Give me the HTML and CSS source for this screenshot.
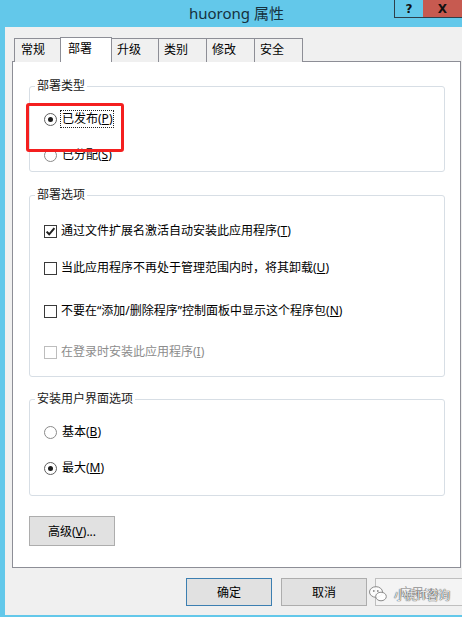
FILE: index.html
```html
<!DOCTYPE html>
<html lang="zh">
<head>
<meta charset="utf-8">
<title>huorong 属性</title>
<link rel="stylesheet" href="styles.css">
</head>
<body>
<div class="window">
  <div class="titlebar">
    <div></div>
    <div class="title">huorong 属性</div>
    <div class="winbtns"><span class="wb help">?</span><span class="wb close">X</span></div>
  </div>
  <div class="frame">
    <div class="tabs">
      <div class="tab">常规</div>
      <div class="tab active">部署</div>
      <div class="tab">升级</div>
      <div class="tab">类别</div>
      <div class="tab">修改</div>
      <div class="tab">安全</div>
    </div>
    <div class="panel">
      <div class="group g1">
        <div class="legend">部署类型</div>
        <div class="opt r1"><span class="radio on"></span><span class="lbl focus">已发布(<u>P</u>)</span></div>
        <div class="opt r2"><span class="radio"></span><span class="lbl">已分配(<u>S</u>)</span></div>
      </div>
      <div class="group g2">
        <div class="legend">部署选项</div>
        <div class="opt c1"><span class="check on"><svg viewBox="0 0 13 13" width="13" height="13"><path d="M2.6 6.6 L5.2 9.3 L10.4 3.2" fill="none" stroke="#1f1f1f" stroke-width="2"/></svg></span><span class="lbl">通过文件扩展名激活自动安装此应用程序(<u>T</u>)</span></div>
        <div class="opt c2"><span class="check"></span><span class="lbl">当此应用程序不再处于管理范围内时，将其卸载(<u>U</u>)</span></div>
        <div class="opt c3"><span class="check"></span><span class="lbl">不要在“添加/删除程序”控制面板中显示这个程序包(<u>N</u>)</span></div>
        <div class="opt c4 disabled"><span class="check"></span><span class="lbl">在登录时安装此应用程序(<u>I</u>)</span></div>
      </div>
      <div class="group g3">
        <div class="legend">安装用户界面选项</div>
        <div class="opt u1"><span class="radio"></span><span class="lbl">基本(<u>B</u>)</span></div>
        <div class="opt u2"><span class="radio on"></span><span class="lbl">最大(<u>M</u>)</span></div>
      </div>
      <button class="btn adv">高级(<u>V</u>)...</button>
    </div>
    <div class="actions">
      <button class="btn primary">确定</button>
      <button class="btn">取消</button>
      <button class="btn off">应用(<u>A</u>)</button>
    </div>
  </div>
</div>
<div class="annot"></div>
<div class="watermark">
  <svg class="wm-icon" viewBox="0 0 20 18" width="20" height="18">
    <ellipse cx="8" cy="7" rx="6.5" ry="5.3" fill="rgba(255,255,255,0.85)" stroke="#8a8a8a" stroke-width="1"/>
    <ellipse cx="13" cy="11.5" rx="5.3" ry="4.3" fill="rgba(255,255,255,0.9)" stroke="#8a8a8a" stroke-width="1"/>
    <circle cx="5.8" cy="6" r="0.9" fill="#8a8a8a"/>
    <circle cx="9.8" cy="6" r="0.9" fill="#8a8a8a"/>
  </svg>
  <span class="wm-text">小虎IT咨询</span>
</div>
</body>
</html>
```
FILE: styles.css
```css
html, body {
  margin: 0;
  padding: 0;
}
body {
  width: 462px;
  height: 617px;
  overflow: hidden;
  position: relative;
  background: #f0f0f0;
  font-family: "Noto Sans", "Noto Sans CJK SC", sans-serif;
  font-size: 12px;
  color: #000;
}
u { text-decoration: underline; text-underline-offset: 1px; }

.window {
  display: flex;
  flex-direction: column;
  height: 617px;
}

.titlebar {
  height: 27px;
  background: #63c8ea;
  display: grid;
  grid-template-columns: 1fr auto 1fr;
  padding-left: 11px;
  flex-shrink: 0;
}
.title {
  font-family: "Noto Sans", "Noto Sans CJK SC", sans-serif;
  font-size: 15px;
  line-height: 26px;
  color: #16313d;
  white-space: nowrap;
}
.winbtns {
  justify-self: end;
  align-self: start;
  display: flex;
}
.wb {
  height: 18px;
  display: flex;
  align-items: center;
  justify-content: center;
  font-family: "DejaVu Sans", sans-serif;
  font-weight: bold;
  font-size: 12px;
  color: #111;
  box-sizing: border-box;
}
.help {
  width: 29px;
  border: 1px solid #2e3f4a;
  border-top: none;
  border-right: none;
  background: #63c8ea;
}
.close {
  width: 39px;
  background: #c75a50;
  border-bottom: 1px solid #2e3f4a;
}

.frame {
  flex: 1;
  background: #f0f0f0;
  border-left: 5px solid #63c8ea;
  border-bottom: 2px solid #63c8ea;
  display: flex;
  flex-direction: column;
}

.tabs {
  display: flex;
  align-items: flex-end;
  height: 25px;
  margin-top: 10px;
  margin-bottom: -1px;
  padding-left: 9px;
  position: relative;
  z-index: 1;
}
.tab {
  box-sizing: border-box;
  height: 24px;
  width: 49px;
  margin-left: -1px;
  border: 1px solid #8d8e96;
  border-bottom: none;
  background: #f0f0f0;
  padding-left: 5px;
  line-height: 22px;
  color: #000;
}
.tab:nth-child(1) { margin-left: 0; width: 48px; padding-left: 6px; }
.tab:nth-child(3) { width: 48px; }
.tab.active {
  height: 25px;
  width: 52px;
  margin-left: -2px;
  background: #fff;
  padding-left: 7px;
  line-height: 22px;
}

.panel {
  box-sizing: border-box;
  margin-left: 7px;
  width: 449px;
  height: 507px;
  background: #fff;
  border: 1px solid #8d8e96;
  padding: 24px 15px 0 16px;
  display: flex;
  flex-direction: column;
  align-items: flex-start;
}

.group {
  align-self: stretch;
  border: 1px solid #d7dee5;
  border-radius: 3px;
  padding: 0 0 0 14px;
}
.legend {
  width: fit-content;
  height: 16px;
  line-height: 16px;
  margin: -9px 0 0 -9px;
  padding: 0 2px;
  background: #fff;
  color: #1a1a1a;
}
.g1 { padding-bottom: 6px; }
.g2 { margin-top: 23px; padding-bottom: 14px; }
.g3 { margin-top: 22px; padding-bottom: 17px; }

.opt {
  display: flex;
  align-items: center;
  height: 20px;
  gap: 3px;
  white-space: nowrap;
}
.r1 { margin-top: 15px; }
.r2 { margin-top: 16px; }
.c1 { margin-top: 18px; }
.c2 { margin-top: 17px; }
.c3 { margin-top: 23px; }
.c4 { margin-top: 21px; }
.u1 { margin-top: 15px; }
.u2 { margin-top: 16px; }

.lbl {
  line-height: 16px;
  padding: 0 1px;
  border: 1px solid transparent;
}
.check + .lbl { margin-left: -1px; }
.lbl.focus { border: 1px dotted #222; }

.radio {
  box-sizing: border-box;
  width: 13px;
  height: 13px;
  border-radius: 50%;
  border: 1px solid #8a8a8a;
  background: #fff;
  display: flex;
  align-items: center;
  justify-content: center;
  flex-shrink: 0;
}
.radio.on { border-color: #5f5f5f; }
.radio.on::after {
  content: "";
  width: 5px;
  height: 5px;
  border-radius: 50%;
  background: #1c1c1c;
}
.check {
  box-sizing: border-box;
  width: 13px;
  height: 13px;
  border: 1px solid #3a3a3a;
  background: #fff;
  flex-shrink: 0;
  position: relative;
  overflow: visible;
}
.check svg {
  display: block;
  margin: -1px 0 0 -1px;
}
.disabled .check { border-color: #bdbdbd; }
.disabled .lbl { color: #8c8c8c; }

.btn {
  box-sizing: border-box;
  font-family: "Noto Sans", "Noto Sans CJK SC", sans-serif;
  font-size: 12px;
  color: #000;
  background: #e1e1e1;
  border: 1px solid #adadad;
  border-radius: 0;
  padding: 0;
  margin: 0;
  flex-shrink: 0;
}
.adv {
  margin-top: 20px;
  width: 86px;
  height: 30px;
}

.actions {
  display: flex;
  gap: 9px;
  margin-top: 10px;
  padding-left: 181px;
}
.actions .btn {
  width: 86px;
  height: 28px;
}
.actions .btn:nth-child(3) { margin-left: -1px; width: 88px; }
.btn.primary { border-color: #3c7fb1; }
.btn.off {
  background: #f4f4f4;
  border-color: #bfbfbf;
  color: #a0a0a0;
}

.annot {
  position: absolute;
  left: 26px;
  top: 103px;
  width: 98px;
  height: 49px;
  box-sizing: border-box;
  border: 3px solid #f41f1f;
  border-radius: 3px;
}

.watermark {
  position: absolute;
  left: 368px;
  top: 585px;
  display: flex;
  align-items: center;
  gap: 6px;
}
.wm-icon { display: block; }
.wm-text {
  font-family: "Noto Sans CJK SC", sans-serif;
  font-size: 12px;
  color: rgba(255, 255, 255, 0.9);
  text-shadow: 0 0 1px #333, 0 0 1px #555;
  letter-spacing: -0.5px;
}
```
